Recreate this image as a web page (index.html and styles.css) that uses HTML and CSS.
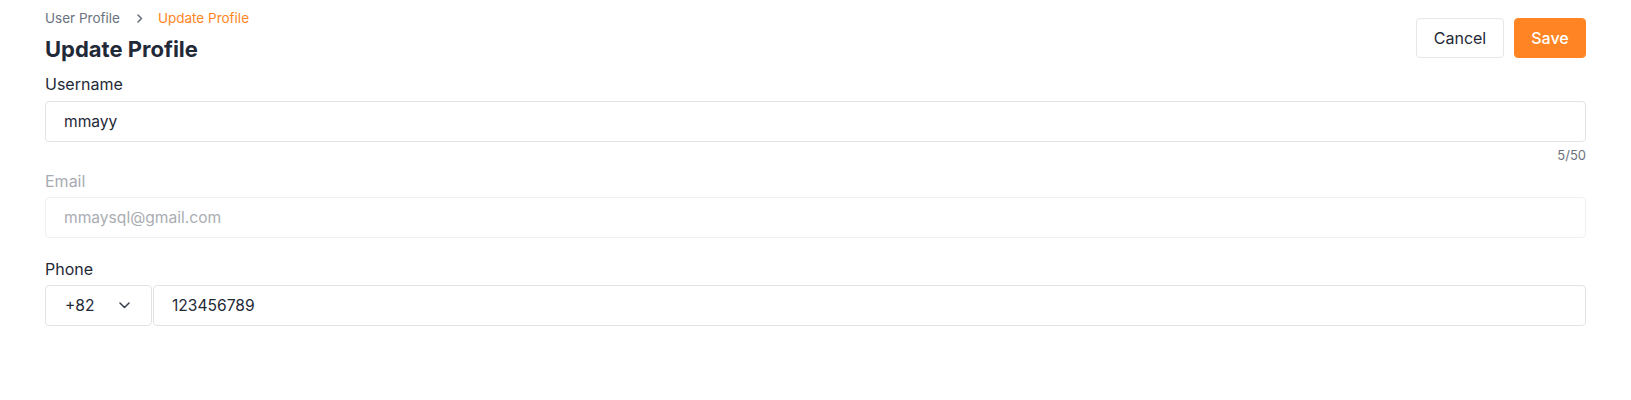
FILE: index.html
```html
<!DOCTYPE html>
<html lang="en">
<head>
<meta charset="utf-8">
<title>Update Profile</title>
<link rel="stylesheet" href="styles.css">
</head>
<body>
<div class="page">
  <header class="header">
    <div class="heading">
      <nav class="breadcrumb">
        <span class="crumb">User Profile</span>
        <svg class="crumb-sep" width="6" height="9" viewBox="0 0 6 9"><path d="M1 1 L4.5 4.5 L1 8" fill="none" stroke="#6b7280" stroke-width="1.6" stroke-linecap="round" stroke-linejoin="round"/></svg>
        <span class="crumb current">Update Profile</span>
      </nav>
      <h1 class="title">Update Profile</h1>
    </div>
    <div class="actions">
      <button class="btn btn-cancel">Cancel</button>
      <button class="btn btn-save">Save</button>
    </div>
  </header>

  <div class="field field-username">
    <label class="label">Username</label>
    <div class="input">mmayy</div>
    <div class="counter">5/50</div>
  </div>

  <div class="field field-email">
    <label class="label label-disabled">Email</label>
    <div class="input input-disabled">mmaysql@gmail.com</div>
  </div>

  <div class="field">
    <label class="label">Phone</label>
    <div class="phone-row">
      <div class="input select">
        <span>+82</span>
        <svg class="chev" width="11" height="7" viewBox="0 0 11 7"><path d="M1 1 L5.5 5.5 L10 1" fill="none" stroke="#374151" stroke-width="1.5" stroke-linecap="round" stroke-linejoin="round"/></svg>
      </div>
      <div class="input phone">123456789</div>
    </div>
  </div>
</div>
</body>
</html>
```

FILE: styles.css
```css
* { box-sizing: border-box; }
html, body { margin: 0; background: #ffffff; }
body {
  font-family: Inter, "Noto Sans", sans-serif;
  color: #1f2937;
}
.page {
  padding: 8px 45px 0 45px;
}
.header {
  display: flex;
  justify-content: space-between;
  align-items: flex-start;
}
.breadcrumb {
  display: flex;
  align-items: center;
  font-size: 13.5px;
  line-height: 20px;
  height: 20px;
}
.crumb { color: #6b7280; }
.crumb.current { color: #ff8524; }
.crumb-sep { margin: 0 15px 0 17px; }
.title {
  margin: 6px 0 0 0;
  font-size: 22px;
  line-height: 30px;
  font-weight: 700;
  color: #1f2937;
}
.actions {
  display: flex;
  gap: 10px;
  margin-top: 10px;
}
.btn {
  font-family: inherit;
  font-size: 16px;
  height: 40px;
  border-radius: 4px;
  padding: 0;
  cursor: pointer;
}
.btn-cancel {
  width: 88px;
  background: #ffffff;
  border: 1px solid #e5e7eb;
  color: #1f2937;
}
.btn-save {
  width: 72px;
  background: #ff8524;
  border: 1px solid #ff8524;
  color: #ffffff;
  font-weight: 500;
}
.field { display: flex; flex-direction: column; }
.field-username { margin-top: 9px; }
.field-email { margin-top: 6px; margin-bottom: 20px; }
.label {
  font-size: 16px;
  line-height: 22px;
  color: #1f2937;
  margin-bottom: 5px;
}
.field-username .label { margin-bottom: 6px; }
.label-disabled { color: #a8abb2; }
.input {
  height: 41px;
  border: 1px solid #e3e3e3;
  border-radius: 4px;
  background: #ffffff;
  padding: 0 18px;
  display: flex;
  align-items: center;
  font-size: 15.6px;
  color: #1f2937;
}
.input-disabled {
  border-color: #f0f0f0;
  color: #aaadb3;
  background: #ffffff;
}
.counter {
  margin-top: 4px;
  text-align: right;
  font-size: 13px;
  line-height: 18px;
  color: #6b7280;
}
.phone-row {
  display: flex;
  gap: 1px;
}
.select {
  width: 107px;
  flex: none;
  justify-content: space-between;
  padding-left: 19px;
  padding-right: 21px;
}
.phone { flex: 1; }
```
